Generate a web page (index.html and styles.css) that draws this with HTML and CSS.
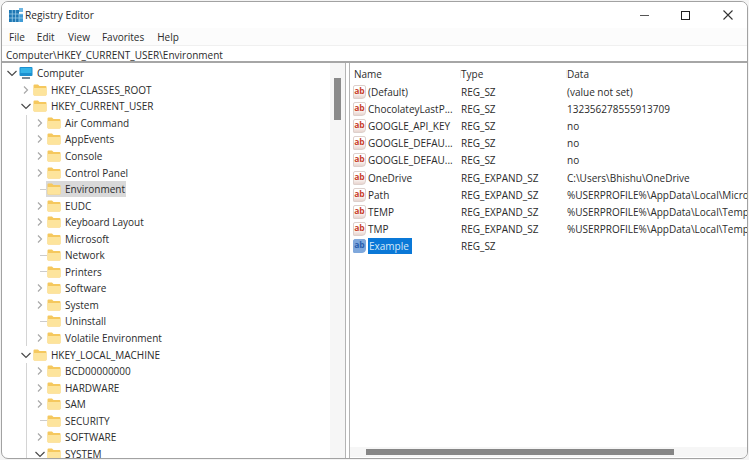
FILE: index.html
```html
<!DOCTYPE html>
<html lang="en">
<head>
<meta charset="utf-8">
<title>Registry Editor</title>
<link rel="stylesheet" href="styles.css">
</head>
<body>
<svg class="defs" width="0" height="0" aria-hidden="true">
  <symbol id="folder" viewBox="0 0 14 12">
    <path d="M0.5 1.5 Q0.5 0.5 1.5 0.5 H5 L6.5 2 H12.5 Q13.5 2 13.5 3 V10.5 Q13.5 11.5 12.5 11.5 H1.5 Q0.5 11.5 0.5 10.5 Z" fill="#f5c85e"/>
    <path d="M0.5 4 H13.5 V10.5 Q13.5 11.5 12.5 11.5 H1.5 Q0.5 11.5 0.5 10.5 Z" fill="#fde49c"/>
  </symbol>
  <symbol id="right" viewBox="0 0 14 14"><path d="M5 3.5 L8.5 7 L5 10.5" fill="none" stroke="#a8a8a8" stroke-width="1.2"/></symbol>
  <symbol id="down" viewBox="0 0 14 14"><path d="M2.5 5 L7 9.5 L11.5 5" fill="none" stroke="#4a4a4a" stroke-width="1.2"/></symbol>
</svg>
<div class="window">
  <header class="titlebar">
    <svg class="appicon" viewBox="0 0 16 16" width="16" height="16">
      <rect x="1" y="3" width="10" height="12" fill="#1f78b4"/>
      <rect x="11" y="7" width="4" height="8" fill="#3f9bd6"/>
      <path d="M1 7 H15 M1 11 H15 M4.3 3 V15 M7.6 3 V15 M11 7 V15" stroke="#a8d4ee" stroke-width="0.7"/>
      <rect x="11" y="1" width="4" height="4" fill="#6fb6e2"/>
    </svg>
    <span class="title">Registry Editor</span>
    <div class="controls">
      <span class="min"></span>
      <span class="max"></span>
      <svg class="close" viewBox="0 0 10 10" width="10" height="10"><path d="M0.5 0.5 L9.5 9.5 M9.5 0.5 L0.5 9.5" stroke="#333" stroke-width="1.1"/></svg>
    </div>
  </header>
  <nav class="menu">
    <span class="m-file">File</span><span class="m-edit">Edit</span><span class="m-view">View</span><span class="m-fav">Favorites</span><span>Help</span>
  </nav>
  <div class="address">Computer\HKEY_CURRENT_USER\Environment</div>
  <main class="panes">
    <section class="treepane">
      <div class="tree">
        <div class="row"><svg class="chev"><use href="#down"/></svg>
          <svg class="pc" viewBox="0 0 14 14" width="14" height="14"><rect x="0.5" y="1" width="13" height="9" rx="1" fill="#1b8fcf"/><rect x="1.5" y="2" width="11" height="5" fill="#35b4e8"/><rect x="3" y="11" width="8" height="2" fill="#7a8a96"/></svg>
          <span>Computer</span></div>
        <div class="lvl1">
          <div class="row"><svg class="chev"><use href="#right"/></svg><svg class="fold"><use href="#folder"/></svg><span>HKEY_CLASSES_ROOT</span></div>
          <div class="row"><svg class="chev"><use href="#down"/></svg><svg class="fold"><use href="#folder"/></svg><span>HKEY_CURRENT_USER</span></div>
          <div class="kids">
            <div class="row"><svg class="chev"><use href="#right"/></svg><svg class="fold"><use href="#folder"/></svg><span>Air Command</span></div>
            <div class="row"><svg class="chev"><use href="#right"/></svg><svg class="fold"><use href="#folder"/></svg><span>AppEvents</span></div>
            <div class="row"><svg class="chev"><use href="#right"/></svg><svg class="fold"><use href="#folder"/></svg><span>Console</span></div>
            <div class="row"><svg class="chev"><use href="#right"/></svg><svg class="fold"><use href="#folder"/></svg><span>Control Panel</span></div>
            <div class="row current"><i class="stub"></i><svg class="fold"><use href="#folder"/></svg><span>Environment</span></div>
            <div class="row"><svg class="chev"><use href="#right"/></svg><svg class="fold"><use href="#folder"/></svg><span>EUDC</span></div>
            <div class="row"><svg class="chev"><use href="#right"/></svg><svg class="fold"><use href="#folder"/></svg><span>Keyboard Layout</span></div>
            <div class="row"><svg class="chev"><use href="#right"/></svg><svg class="fold"><use href="#folder"/></svg><span>Microsoft</span></div>
            <div class="row"><i class="stub"></i><svg class="fold"><use href="#folder"/></svg><span>Network</span></div>
            <div class="row"><i class="stub"></i><svg class="fold"><use href="#folder"/></svg><span>Printers</span></div>
            <div class="row"><svg class="chev"><use href="#right"/></svg><svg class="fold"><use href="#folder"/></svg><span>Software</span></div>
            <div class="row"><svg class="chev"><use href="#right"/></svg><svg class="fold"><use href="#folder"/></svg><span>System</span></div>
            <div class="row"><i class="stub"></i><svg class="fold"><use href="#folder"/></svg><span>Uninstall</span></div>
            <div class="row"><svg class="chev"><use href="#right"/></svg><svg class="fold"><use href="#folder"/></svg><span>Volatile Environment</span></div>
          </div>
          <div class="row"><svg class="chev"><use href="#down"/></svg><svg class="fold"><use href="#folder"/></svg><span>HKEY_LOCAL_MACHINE</span></div>
          <div class="kids">
            <div class="row"><svg class="chev"><use href="#right"/></svg><svg class="fold"><use href="#folder"/></svg><span>BCD00000000</span></div>
            <div class="row"><svg class="chev"><use href="#right"/></svg><svg class="fold"><use href="#folder"/></svg><span>HARDWARE</span></div>
            <div class="row"><svg class="chev"><use href="#right"/></svg><svg class="fold"><use href="#folder"/></svg><span>SAM</span></div>
            <div class="row"><i class="stub"></i><svg class="fold"><use href="#folder"/></svg><span>SECURITY</span></div>
            <div class="row"><svg class="chev"><use href="#right"/></svg><svg class="fold"><use href="#folder"/></svg><span>SOFTWARE</span></div>
            <div class="row"><svg class="chev"><use href="#down"/></svg><svg class="fold"><use href="#folder"/></svg><span>SYSTEM</span></div>
          </div>
        </div>
      </div>
      <div class="vscroll"><div class="vthumb"></div></div>
    </section>
    <section class="listpane">
      <div class="list">
        <div class="line head"><span class="c-name">Name</span><span class="c-type">Type</span><span class="c-data">Data</span></div>
        <div class="line"><span class="c-name"><b class="ab">ab</b><span>(Default)</span></span><span class="c-type">REG_SZ</span><span class="c-data">(value not set)</span></div>
        <div class="line"><span class="c-name"><b class="ab">ab</b><span>ChocolateyLastP...</span></span><span class="c-type">REG_SZ</span><span class="c-data">132356278555913709</span></div>
        <div class="line"><span class="c-name"><b class="ab">ab</b><span>GOOGLE_API_KEY</span></span><span class="c-type">REG_SZ</span><span class="c-data">no</span></div>
        <div class="line"><span class="c-name"><b class="ab">ab</b><span>GOOGLE_DEFAU...</span></span><span class="c-type">REG_SZ</span><span class="c-data">no</span></div>
        <div class="line"><span class="c-name"><b class="ab">ab</b><span>GOOGLE_DEFAU...</span></span><span class="c-type">REG_SZ</span><span class="c-data">no</span></div>
        <div class="line"><span class="c-name"><b class="ab">ab</b><span>OneDrive</span></span><span class="c-type">REG_EXPAND_SZ</span><span class="c-data">C:\Users\Bhishu\OneDrive</span></div>
        <div class="line"><span class="c-name"><b class="ab">ab</b><span>Path</span></span><span class="c-type">REG_EXPAND_SZ</span><span class="c-data">%USERPROFILE%\AppData\Local\Microsoft\WindowsApps</span></div>
        <div class="line"><span class="c-name"><b class="ab">ab</b><span>TEMP</span></span><span class="c-type">REG_EXPAND_SZ</span><span class="c-data">%USERPROFILE%\AppData\Local\Temp</span></div>
        <div class="line"><span class="c-name"><b class="ab">ab</b><span>TMP</span></span><span class="c-type">REG_EXPAND_SZ</span><span class="c-data">%USERPROFILE%\AppData\Local\Temp</span></div>
        <div class="line"><span class="c-name"><b class="ab sel">ab</b><span class="seltext">Example</span></span><span class="c-type">REG_SZ</span><span class="c-data"></span></div>
      </div>
      <div class="hscroll"><div class="hthumb"></div></div>
    </section>
  </main>
</div>
</body>
</html>
```
FILE: styles.css
```css
* { box-sizing: border-box; }
html, body { margin: 0; height: 100%; }
body {
  width: 749px;
  height: 460px;
  padding: 1px 0 0 1px;
  background: #f4f4f4;
  overflow: hidden;
  font-family: "Open Sans", "Noto Sans", sans-serif;
  font-size: 10px;
  color: #2b2b2b;
}
.defs { display: block; height: 0; }
.window {
  width: 747px;
  height: 458px;
  display: flex;
  flex-direction: column;
  background: #fff;
  border: 1px solid #a2a2a2;
  border-radius: 7px;
  overflow: hidden;
}
.titlebar {
  display: flex;
  align-items: center;
  height: 26px;
  padding-left: 6px;
  background: #fff;
}
.appicon { margin-right: 1px; }
.title { font-size: 10.2px; }
.controls { margin-left: auto; display: flex; align-items: center; }
.min { width: 9px; height: 1px; background: #555; margin-right: 32px; }
.max { width: 9px; height: 9px; border: 1px solid #222; margin-right: 33px; }
.close { margin-right: 14px; }
.menu {
  display: flex;
  align-items: center;
  height: 17px;
  padding-left: 7px;
  background: #fcfcfc;
}
.m-file { margin-right: 12px; }
.m-edit { margin-right: 13.5px; }
.m-view { margin-right: 12px; }
.m-fav { margin-right: 13px; }
.address {
  height: 18px;
  padding-left: 4px;
  line-height: 19px;
  border-top: 1px solid #f0f0f0;
  border-bottom: 2px solid #a6a6a6;
  white-space: nowrap;
}
.panes { flex: 1; display: flex; min-height: 0; }
.treepane {
  width: 344px;
  display: flex;
  border-right: 1px solid #b4b4b4;
}
.tree { flex: 1; padding: 2px 0 0 3px; overflow: hidden; min-width: 0; }
.row {
  display: flex;
  align-items: center;
  height: 16.55px;
  white-space: nowrap;
}
.chev, .stub { flex: 0 0 14px; width: 14px; height: 14px; }
.fold { flex: 0 0 14px; width: 14px; height: 12px; }
.pc { flex: 0 0 14px; }
.row > span { margin-left: 4px; }
.lvl1 { margin-left: 14px; }
.kids {
  margin-left: 7px;
  padding-left: 6px;
  border-left: 1px solid #d4d4d4;
}
.stub {
  flex: 0 0 7px;
  width: 7px;
  height: 1px;
  margin-left: 7px;
  background: #cccccc;
}
.current { position: relative; }
.current > .fold, .current > span { position: relative; }
.current::before {
  content: "";
  position: absolute;
  left: 13px;
  width: 80px;
  top: 0;
  bottom: 0;
  background: #d9d9d9;
}
.vscroll {
  flex: 0 0 15px;
  background: #f6f6f6;
  padding: 15px 4px 0 4px;
}
.vthumb { width: 7px; height: 42px; background: #8a8a8a; }
.listpane {
  margin-left: 3px;
  flex: 1;
  min-width: 0;
  display: flex;
  flex-direction: column;
  border-left: 1px solid #b4b4b4;
}
.list { flex: 1; padding-left: 3px; overflow: hidden; min-height: 0; }
.line {
  display: flex;
  align-items: center;
  height: 17.1px;
  white-space: nowrap;
}
.head { height: 19.5px; margin-top: 1px; }
.head .c-name { padding-left: 1px; }
.head .c-type, .head .c-data { box-shadow: -4px 0 0 -3px #efefef; }
.c-name { flex: 0 0 108px; display: flex; align-items: center; }
.c-type { flex: 0 0 106px; }
.c-data { flex: 0 0 auto; }
.ab {
  flex: 0 0 13px;
  width: 13px;
  height: 14px;
  margin-right: 2px;
  border: 1px solid #ddd0cc;
  border-radius: 2px 2px 4px 1px;
  background: linear-gradient(#fff 50%, #e8d4ce);
  color: #c8402c;
  font-size: 8.5px;
  font-weight: 700;
  line-height: 9px;
  text-align: center;
  overflow: hidden;
}
.ab.sel { background: #7fa8dc; border-color: #7fa8dc; color: #2a5fae; }
.seltext {
  background: #0a78d7;
  color: #d6e8f8;
  width: 44px;
  height: 16px;
  line-height: 16px;
  padding-left: 1px;
}
.hscroll {
  flex: 0 0 10px;
  margin-bottom: 1px;
  padding: 2px 0 0 16px;
  background: #f6f6f6;
}
.hthumb { width: 308px; height: 6px; background: #868686; }
```
